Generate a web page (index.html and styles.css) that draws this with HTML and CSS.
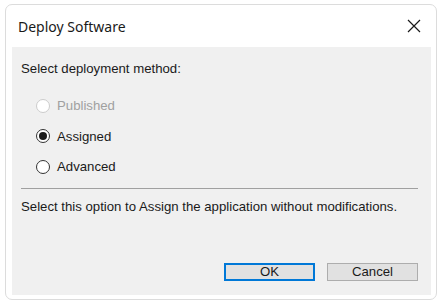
FILE: index.html
```html
<!DOCTYPE html>
<html>
<head>
<meta charset="utf-8">
<link rel="stylesheet" href="styles.css">
</head>
<body>
<div class="window">
  <div class="titlebar">
    <span class="title">Deploy Software</span>
    <svg class="close" width="14" height="14" viewBox="0 0 14 14"><path d="M1 1 L13 13 M13 1 L1 13" stroke="#1a1a1a" stroke-width="1.2" fill="none"/></svg>
  </div>
  <div class="content">
    <div class="label">Select deployment method:</div>
    <div class="options">
      <div class="option disabled"><span class="radio"></span><span>Published</span></div>
      <div class="option"><span class="radio checked"></span><span>Assigned</span></div>
      <div class="option"><span class="radio"></span><span>Advanced</span></div>
    </div>
    <div class="sep"></div>
    <div class="desc">Select this option to Assign the application without modifications.</div>
    <div class="buttons">
      <button class="btn default">OK</button>
      <button class="btn">Cancel</button>
    </div>
  </div>
</div>
</body>
</html>
```
FILE: styles.css
```css
html, body { margin: 0; padding: 0; background: #ffffff; }
body { width: 445px; height: 308px; overflow: hidden; }
.window {
  box-sizing: border-box;
  margin: 4px 0 0 5px;
  width: 432px;
  height: 296px;
  border: 1px solid #dcdcdc;
  border-radius: 7px;
  padding: 0 5px 4px 6px;
  display: flex;
  flex-direction: column;
  background: #fff;
}
.titlebar {
  height: 42px;
  display: flex;
  align-items: center;
  justify-content: space-between;
  padding: 0 10px 0 6px;
  flex: none;
}
.title {
  font-family: "Noto Sans", sans-serif;
  font-size: 14px;
  color: #1a1a1a;
}
.content {
  flex: 1;
  background: #f0f0f0;
  padding: 14px 13px 0 9px;
  display: flex;
  flex-direction: column;
  font-family: "Liberation Sans", Arial, sans-serif;
  font-size: 13.2px;
  color: #1a1a1a;
}
.label { line-height: 15px; }
.options {
  display: flex;
  flex-direction: column;
  gap: 15.5px;
  padding: 22px 0 0 15px;
}
.option { display: flex; align-items: center; gap: 7px; height: 15px; line-height: 15px; }
.option.disabled { color: #a0a0a0; }
.radio {
  box-sizing: border-box;
  width: 14px;
  height: 14px;
  border: 1px solid #333;
  border-radius: 50%;
  background: #fff;
  display: flex;
  align-items: center;
  justify-content: center;
  flex: none;
}
.option.disabled .radio { border-color: #cccccc; }
.radio.checked::after {
  content: "";
  width: 8px;
  height: 8px;
  border-radius: 50%;
  background: #1a1a1a;
}
.sep {
  height: 1px;
  background: #a0a0a0;
  margin-top: 14px;
}
.desc { margin-top: 10px; line-height: 15px; }
.buttons {
  margin-top: auto;
  margin-bottom: 14px;
  display: flex;
  justify-content: flex-end;
  gap: 12px;
}
.btn {
  box-sizing: border-box;
  width: 91px;
  height: 18px;
  padding: 0;
  background: #e1e1e1;
  border: 1px solid #adadad;
  font-family: "Liberation Sans", Arial, sans-serif;
  font-size: 13.2px;
  line-height: 14px;
  color: #1a1a1a;
}
.btn.default { border: 2px solid #0078d7; }
```
